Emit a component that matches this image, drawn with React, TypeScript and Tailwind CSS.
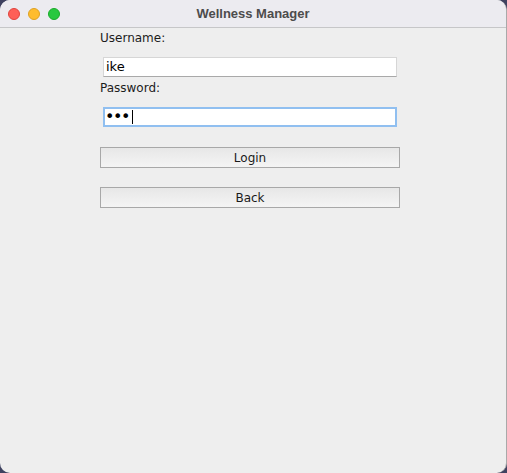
import React from 'react';

const font = { fontFamily: '"DejaVu Sans", "Liberation Sans", sans-serif' };

const App = () => {
  return (
    <div className="w-[507px] h-[473px] bg-[#3f4260] overflow-hidden">
      <div className="w-full h-full rounded-[10px] overflow-hidden bg-[#eeeeee] border-r border-[#a9a9a9] flex flex-col">
        {/* title bar */}
        <div className="relative h-[28px] shrink-0 bg-[#ecebf0] border-b border-[#c6c6c8] flex items-center">
          <div className="flex items-center gap-[8px] pl-[8px]">
            <span className="w-[12px] h-[12px] rounded-full bg-[#fe5f57] border border-[#e0443e]" />
            <span className="w-[12px] h-[12px] rounded-full bg-[#febc2e] border border-[#dea123]" />
            <span className="w-[12px] h-[12px] rounded-full bg-[#28c840] border border-[#1aab29]" />
          </div>
          <div
            className="absolute inset-0 flex items-center justify-center text-[13px] font-bold text-[#4c4c4c] pointer-events-none"
            style={{ fontFamily: '"Liberation Sans", Arial, sans-serif' }}
          >
            Wellness Manager
          </div>
        </div>

        {/* form */}
        <div className="pl-[100px] pt-[2px] w-[400px] flex flex-col text-[12px] text-[#1c1c1c]" style={font}>
          <div className="h-[16px] leading-[16px]">Username:</div>
          <div className="mt-[11px] mx-[3px] h-[20px] bg-white border border-[#d6d6d6] border-b-[#a9a9a9] flex items-center pl-[2px] text-[13px] leading-[16px] text-black">
            ike
          </div>
          <div className="mt-[3px] h-[16px] leading-[16px]">Password:</div>
          <div className="mt-[11px] mx-[3px] h-[20px] bg-white border-2 border-[#90bff0] flex items-center pl-[0px] text-black">
            <span className="text-[16px] leading-[16px] tracking-[-1.5px]">•••</span>
            <span className="ml-[3px] w-[1px] h-[14px] bg-black" />
          </div>

          <button className="mt-[20px] h-[21px] w-[300px] border border-[#a8a8a8] bg-gradient-to-b from-[#e7e7e7] to-[#f4f4f4] flex items-center justify-center text-[12px] text-[#1a1a1a]">
            Login
          </button>
          <button className="mt-[19px] h-[21px] w-[300px] border border-[#a8a8a8] bg-gradient-to-b from-[#e7e7e7] to-[#f4f4f4] flex items-center justify-center text-[12px] text-[#1a1a1a]">
            Back
          </button>
        </div>
      </div>
    </div>
  );
};

export default App;
